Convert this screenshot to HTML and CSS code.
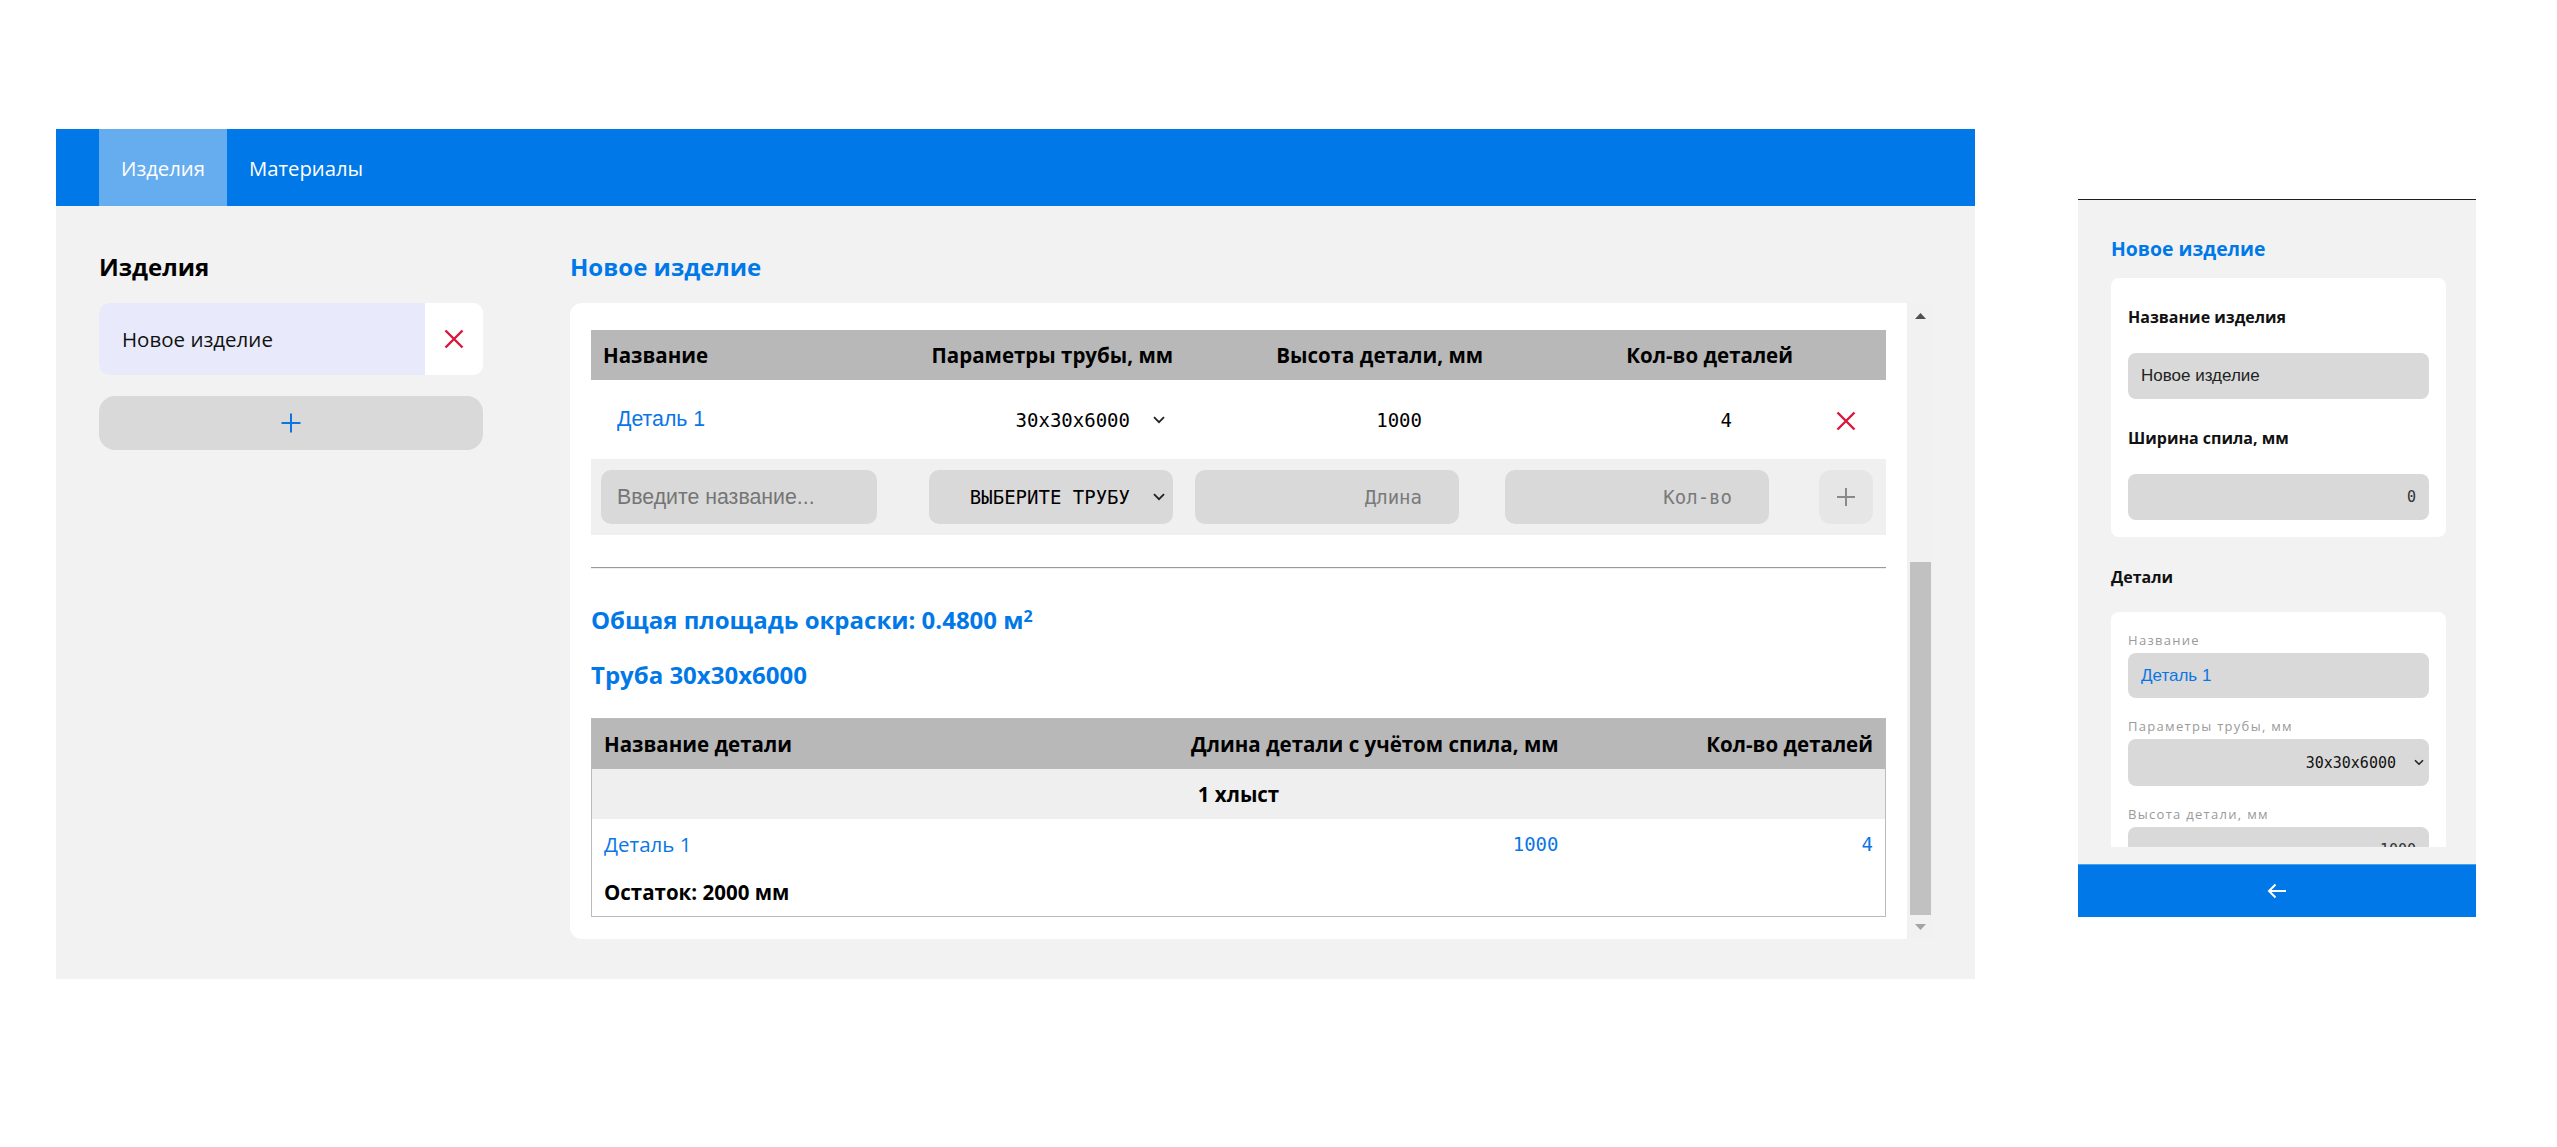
FILE: index.html
```html
<!DOCTYPE html>
<html lang="ru">
<head>
<meta charset="utf-8">
<title>Изделия</title>
<link rel="stylesheet" href="styles.css">
</head>
<body>
<div class="screen">
  <div class="app">
    <nav class="topbar">
      <a class="tab active">Изделия</a>
      <a class="tab">Материалы</a>
    </nav>
    <div class="content">
      <aside class="sidebar">
        <h2 class="title">Изделия</h2>
        <div class="product">
          <span class="product-name">Новое изделие</span>
          <button class="product-del" type="button">
            <svg width="20" height="20" viewBox="0 0 20 20"><path d="M1.5 1.5L18.5 18.5M18.5 1.5L1.5 18.5" stroke="#dc143c" stroke-width="2.4" fill="none"/></svg>
          </button>
        </div>
        <button class="add-product" type="button">
          <svg width="20" height="20" viewBox="0 0 20 20"><path d="M10 0.5V19.5M0.5 10H19.5" stroke="#0a76e6" stroke-width="2" fill="none"/></svg>
        </button>
      </aside>
      <main class="editor">
        <h2 class="title">Новое изделие</h2>
        <div class="card">
          <div class="card-body">
            <table class="parts">
              <colgroup>
                <col class="c-name"><col class="c-pipe"><col class="c-h"><col class="c-qty"><col class="c-act">
              </colgroup>
              <thead>
                <tr>
                  <th class="left">Название</th>
                  <th>Параметры трубы, мм</th>
                  <th>Высота детали, мм</th>
                  <th>Кол-во деталей</th>
                  <th></th>
                </tr>
              </thead>
              <tbody>
                <tr class="row-item">
                  <td><input class="field bare link-text" type="text" value="Деталь 1"></td>
                  <td class="td-pipe">
                    <div class="select bare"><span>30x30x6000</span>
                      <svg width="12" height="8" viewBox="0 0 12 8"><path d="M1 1.2L6 6.2L11 1.2" stroke="#222" stroke-width="1.8" fill="none"/></svg>
                    </div>
                  </td>
                  <td><input class="field num bare" type="text" value="1000"></td>
                  <td><input class="field num bare" type="text" value="4"></td>
                  <td class="td-act">
                    <svg class="del-icon" width="20" height="20" viewBox="0 0 20 20"><path d="M1.5 1.5L18.5 18.5M18.5 1.5L1.5 18.5" stroke="#dc143c" stroke-width="2.4" fill="none"/></svg>
                  </td>
                </tr>
                <tr class="row-new">
                  <td><input class="field" type="text" placeholder="Введите название..."></td>
                  <td class="td-pipe">
                    <div class="select"><span>ВЫБЕРИТЕ ТРУБУ</span>
                      <svg width="12" height="8" viewBox="0 0 12 8"><path d="M1 1.2L6 6.2L11 1.2" stroke="#222" stroke-width="1.8" fill="none"/></svg>
                    </div>
                  </td>
                  <td><input class="field num" type="text" placeholder="Длина"></td>
                  <td><input class="field num" type="text" placeholder="Кол-во"></td>
                  <td class="td-act">
                    <button class="add-part" type="button">
                      <svg width="20" height="20" viewBox="0 0 20 20"><path d="M10 1V19M1 10H19" stroke="#8a8a8a" stroke-width="2" fill="none"/></svg>
                    </button>
                  </td>
                </tr>
              </tbody>
            </table>

            <hr class="sep">

            <h3 class="summary">Общая площадь окраски: 0.4800 м<sup>2</sup></h3>
            <h3 class="summary">Труба 30x30x6000</h3>

            <table class="cut">
              <colgroup>
                <col class="k-name"><col class="k-len"><col class="k-qty">
              </colgroup>
              <thead>
                <tr>
                  <th class="left">Название детали</th>
                  <th>Длина детали с учётом спила, мм</th>
                  <th>Кол-во деталей</th>
                </tr>
              </thead>
              <tbody>
                <tr class="group"><td colspan="3">1 хлыст</td></tr>
                <tr>
                  <td class="link">Деталь 1</td>
                  <td class="mono">1000</td>
                  <td class="mono">4</td>
                </tr>
                <tr class="rest"><td colspan="3">Остаток: 2000 мм</td></tr>
              </tbody>
            </table>
          </div>
          <div class="scrollbar">
            <div class="sb-btn">
              <svg width="11" height="6" viewBox="0 0 11 6"><path d="M0 6L5.5 0L11 6Z" fill="#505050"/></svg>
            </div>
            <div class="sb-track"><div class="sb-thumb"></div></div>
            <div class="sb-btn down">
              <svg width="11" height="6" viewBox="0 0 11 6"><path d="M0 0H11L5.5 6Z" fill="#a3a3a3"/></svg>
            </div>
          </div>
        </div>
      </main>
    </div>
  </div>

  <div class="mobile">
    <div class="m-scroll">
      <h2 class="m-title">Новое изделие</h2>
      <div class="m-card m-card-main">
        <div class="m-label">Название изделия</div>
        <input class="m-field" type="text" value="Новое изделие">
        <div class="m-label m-label-next">Ширина спила, мм</div>
        <input class="m-field m-num" type="text" value="0">
      </div>
      <div class="m-section">Детали</div>
      <div class="m-card m-card-parts">
        <div class="m-small">Название</div>
        <input class="m-field m-link" type="text" value="Деталь 1">
        <div class="m-small m-small-next">Параметры трубы, мм</div>
        <div class="m-select"><span>30x30x6000</span>
          <svg width="10" height="7" viewBox="0 0 10 7"><path d="M1 1.2L5 5.2L9 1.2" stroke="#222" stroke-width="1.6" fill="none"/></svg>
        </div>
        <div class="m-small m-small-next">Высота детали, мм</div>
        <input class="m-field m-num" type="text" value="1000">
      </div>
    </div>
    <div class="m-bar">
      <svg width="20" height="16" viewBox="0 0 20 16"><path d="M19 8H2M8.5 1.5L2 8L8.5 14.5" stroke="#fff" stroke-width="2" fill="none"/></svg>
    </div>
  </div>
</div>
</body>
</html>
```

FILE: styles.css
```css
* { box-sizing: border-box; }

body {
  margin: 0;
  background: #fff;
  font-family: "Open Sans", "Noto Sans", sans-serif;
  color: #111;
}

.screen {
  display: flex;
  align-items: flex-start;
  gap: 103px;
  padding: 129px 0 0 56px;
}

/* ---------- main app ---------- */
.app { width: 1919px; flex: none; }

.topbar {
  display: flex;
  height: 77px;
  background: #0078e8;
  padding-left: 43px;
}
.tab {
  display: flex;
  align-items: center;
  padding: 0 22px;
  color: #fff;
  font-size: 20.3px;
  text-decoration: none;
}
.tab.active { background: #66adf0; }

.content {
  display: flex;
  gap: 87px;
  background: #f2f2f2;
  padding: 45px 42px 40px 43px;
}

.title {
  margin: 0 0 20px;
  font-size: 24px;
  line-height: 32px;
  font-weight: 700;
}

.sidebar { width: 384px; flex: none; }
.sidebar .title { color: #000; }

.product {
  display: flex;
  height: 72px;
  border-radius: 10px;
  overflow: hidden;
  background: #fff;
}
.product-name {
  flex: 1;
  display: flex;
  align-items: center;
  padding-left: 23px;
  background: #e8eafb;
  font-size: 20.5px;
  color: #111;
}
.product-del {
  width: 58px;
  border: 0;
  padding: 0;
  background: #fff;
  display: flex;
  align-items: center;
  justify-content: center;
}
.add-product {
  margin-top: 21px;
  width: 100%;
  height: 54px;
  border: 0;
  border-radius: 16px;
  background: #d9d9d9;
  display: flex;
  align-items: center;
  justify-content: center;
}

.editor { flex: 1; min-width: 0; }
.editor .title { color: #0078e8; }

.card {
  display: flex;
  background: #fff;
  border-radius: 12px 0 0 12px;
  overflow: hidden;
}
.card-body {
  flex: 1;
  min-width: 0;
  padding: 27px 21px 22px;
}

/* scrollbar drawn as a column of the card */
.scrollbar {
  width: 26px;
  flex: none;
  background: #f1f1f1;
  display: flex;
  flex-direction: column;
}
.sb-btn {
  height: 25px;
  display: flex;
  align-items: center;
  justify-content: center;
}
.sb-btn.down { height: 24px; }
.sb-track {
  flex: 1;
  display: flex;
  flex-direction: column;
  justify-content: flex-end;
}
.sb-thumb {
  height: 353px;
  margin: 0 2px 0 3px;
  background: #c1c1c1;
}

/* ---------- parts table ---------- */
.parts {
  width: 100%;
  border-collapse: collapse;
  table-layout: fixed;
}
.c-name { width: 326px; }
.c-pipe { width: 268px; }
.c-h { width: 310px; }
.c-qty { width: 310px; }

.parts th {
  height: 50px;
  background: #b8b8b8;
  font-size: 20.5px;
  font-weight: 700;
  color: #000;
  padding: 0 12px 0 0;
  text-align: right;
  white-space: nowrap;
}
.parts th.left { text-align: left; padding: 0 0 0 12px; }

.parts td { padding: 0 10px; vertical-align: middle; }
.row-item td { height: 79px; }
.row-new td { height: 76px; background: #f0f0f0; }
.parts td.td-pipe { padding: 0 12px; }
.parts td.td-act { text-align: center; }

.field {
  display: block;
  width: 276px;
  height: 54px;
  border: 0;
  border-radius: 10px;
  background: #d9d9d9;
  padding: 0 16px;
  font-family: "Liberation Sans", Arial, sans-serif;
  font-size: 21.3px;
  color: #111;
  outline: none;
}
.field::placeholder { color: #757575; }
.field.bare { background: transparent; }
.field.link-text { color: #0a76e6; }

.field.num {
  width: 264px;
  padding: 0 37px 0 16px;
  text-align: right;
  font-family: "DejaVu Sans Mono", "Liberation Mono", monospace;
  font-size: 19px;
  color: #000;
}
.field.num::placeholder { color: #7a7a7a; }

.select {
  display: flex;
  align-items: center;
  justify-content: flex-end;
  gap: 23px;
  width: 244px;
  height: 54px;
  margin-left: auto;
  padding-right: 8px;
  border-radius: 10px;
  background: #d9d9d9;
  font-family: "DejaVu Sans Mono", "Liberation Mono", monospace;
  font-size: 19px;
  color: #000;
}
.select.bare { background: transparent; }

.del-icon { display: inline-block; vertical-align: middle; }

.add-part {
  width: 54px;
  height: 54px;
  margin: 0 auto;
  border: 0;
  border-radius: 12px;
  background: #e6e6e6;
  display: flex;
  align-items: center;
  justify-content: center;
}

.sep {
  margin: 32px 0 0;
  height: 0;
  border: 0;
  border-top: 1px solid #9a9a9a;
  border-bottom: 1px solid #eeeeee;
}

.summary {
  margin: 35px 0 0;
  font-size: 24px;
  line-height: 32px;
  font-weight: 700;
  color: #0078e8;
}
.summary + .summary { margin-top: 23px; }
.summary sup {
  font-size: 16px;
  line-height: 0;
  vertical-align: 7px;
}

/* ---------- cutting table ---------- */
.cut {
  width: 100%;
  margin-top: 27px;
  border-collapse: collapse;
  border: 1px solid #bbbbbb;
  table-layout: fixed;
}
.k-name { width: 574px; }
.k-len { width: 405px; }

.cut th {
  height: 50px;
  background: #b8b8b8;
  font-size: 20.5px;
  font-weight: 700;
  color: #000;
  padding: 0 12px;
  text-align: right;
  white-space: nowrap;
}
.cut th.left { text-align: left; }
.cut td {
  height: 50px;
  padding: 0 12px;
  font-size: 20.5px;
  text-align: right;
}
.cut .group td {
  background: #efefef;
  text-align: center;
  font-weight: 700;
  color: #000;
}
.cut td.link { text-align: left; color: #0a76e6; }
.cut td.mono {
  font-family: "DejaVu Sans Mono", "Liberation Mono", monospace;
  font-size: 19px;
  color: #0a76e6;
}
.cut .rest td {
  height: 48px;
  text-align: left;
  font-weight: 700;
  color: #000;
}

/* ---------- mobile preview ---------- */
.mobile {
  width: 398px;
  height: 718px;
  flex: none;
  margin-top: 70px;
  display: flex;
  flex-direction: column;
  border-top: 1px solid #1e1e1e;
  background: #f2f2f2;
}
.m-scroll {
  flex: 1;
  min-height: 0;
  overflow: hidden;
  padding: 35px 30px 0 33px;
}
.m-title {
  margin: 0 0 15px;
  font-size: 19.4px;
  line-height: 28px;
  font-weight: 700;
  color: #0078e8;
}
.m-card {
  background: #fff;
  border-radius: 8px;
}
.m-card-main { padding: 28px 17px 17px; }
.m-card-parts { padding: 19px 17px 17px; }

.m-label {
  font-size: 16px;
  line-height: 22px;
  font-weight: 700;
  color: #111;
  margin-bottom: 25px;
}
.m-label-next { margin-top: 28px; }

.m-section {
  margin: 29px 0 24px;
  font-size: 16px;
  line-height: 22px;
  font-weight: 700;
  color: #111;
}

.m-small {
  font-size: 13px;
  line-height: 18px;
  letter-spacing: 1.3px;
  color: #9a9a9a;
  margin-bottom: 4px;
}
.m-small-next { margin-top: 19px; }

.m-field {
  display: block;
  width: 100%;
  height: 46px;
  border: 0;
  border-radius: 8px;
  background: #d9d9d9;
  padding: 0 13px;
  font-family: "Liberation Sans", Arial, sans-serif;
  font-size: 17px;
  color: #222;
  outline: none;
}
.m-card-parts .m-field { height: 45px; }
.m-field.m-link { color: #0a76e6; }
.m-field.m-num {
  text-align: right;
  font-family: "DejaVu Sans Mono", "Liberation Mono", monospace;
  font-size: 15px;
  color: #333;
}

.m-select {
  display: flex;
  align-items: center;
  justify-content: flex-end;
  gap: 18px;
  height: 47px;
  padding-right: 5px;
  border-radius: 8px;
  background: #d9d9d9;
  font-family: "DejaVu Sans Mono", "Liberation Mono", monospace;
  font-size: 15px;
  color: #111;
}

.m-bar {
  flex: none;
  margin-top: 17px;
  height: 53px;
  background: #0078e8;
  border-top: 1px solid #4aa0f0;
  display: flex;
  align-items: center;
  justify-content: center;
}
```
